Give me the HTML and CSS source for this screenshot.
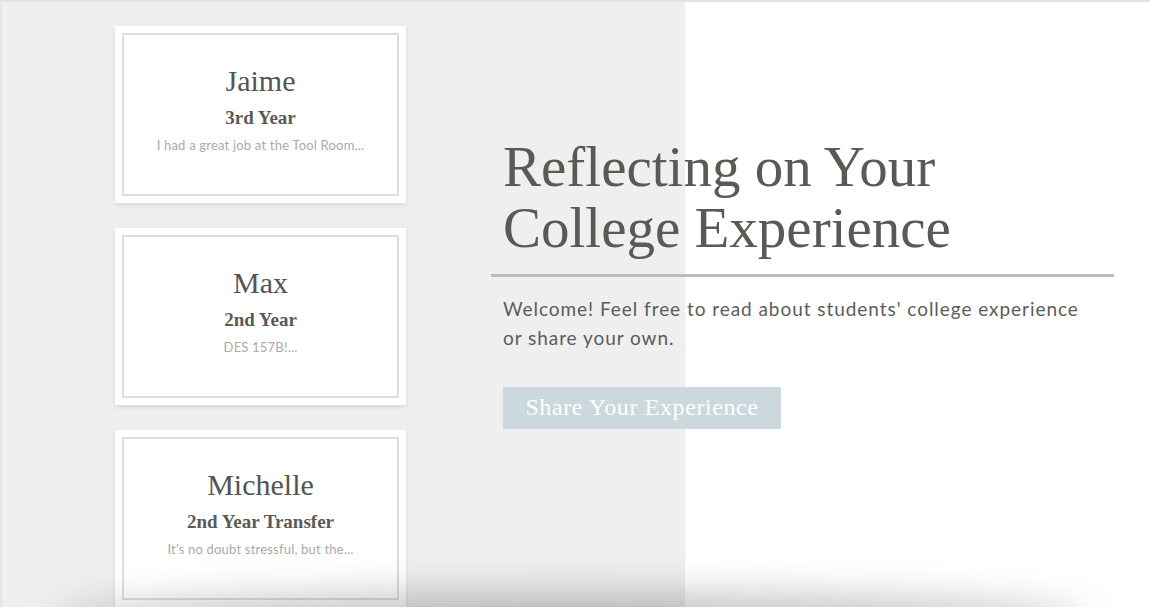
FILE: index.html
```html
<!DOCTYPE html>
<html>
<head>
<meta charset="utf-8">
<link rel="stylesheet" href="styles.css">
</head>
<body>
<div class="page">
  <div class="cards">
    <div class="card">
      <div class="card-inner">
        <div class="name">Jaime</div>
        <div class="year">3rd Year</div>
        <div class="excerpt">I had a great job at the Tool Room...</div>
      </div>
    </div>
    <div class="card">
      <div class="card-inner">
        <div class="name">Max</div>
        <div class="year">2nd Year</div>
        <div class="excerpt">DES 157B!...</div>
      </div>
    </div>
    <div class="card">
      <div class="card-inner">
        <div class="name">Michelle</div>
        <div class="year">2nd Year Transfer</div>
        <div class="excerpt">It's no doubt stressful, but the...</div>
      </div>
    </div>
  </div>
  <div class="hero">
    <h1 class="title">Reflecting on Your<br>College Experience</h1>
    <div class="divider"></div>
    <p class="intro">Welcome! Feel free to read about students' college experience or share your own.</p>
    <a class="btn">Share Your Experience</a>
  </div>
  <div class="shade"></div>
</div>
</body>
</html>
```
FILE: styles.css
```css
html, body {
  margin: 0;
  padding: 0;
  height: 607px;
  overflow: hidden;
}
body {
  background: #fff;
}
.page {
  position: relative;
  height: 607px;
  overflow: hidden;
  border-top: 2px solid #e3e3e3;
  border-left: 2px solid #e6e6e6;
  background: linear-gradient(to right, #efefef 683px, #ffffff 683px);
  display: flex;
  align-items: flex-start;
  padding-left: 113px;
  box-sizing: border-box;
}
.cards {
  width: 291px;
  padding-top: 24px;
  display: flex;
  flex-direction: column;
  gap: 25px;
  flex-shrink: 0;
}
.card {
  background: #fff;
  padding: 7px;
  height: 177px;
  box-sizing: border-box;
  box-shadow: 0 2px 4px rgba(0,0,0,0.10);
}
.card-inner {
  border: 2px solid #dcdfe0;
  height: 100%;
  box-sizing: border-box;
  display: flex;
  flex-direction: column;
  align-items: center;
  padding-top: 28px;
}
.name {
  font-family: "Liberation Serif", serif;
  font-size: 30px;
  color: #545452;
  line-height: 36px;
}
.year {
  font-family: "Liberation Serif", serif;
  font-size: 19px;
  font-weight: bold;
  color: #5a5a57;
  margin-top: 7px;
  line-height: 24px;
}
.excerpt {
  font-family: "Lato", sans-serif;
  font-size: 13px;
  letter-spacing: 0.2px;
  color: #aaaaaa;
  margin-top: 6px;
  line-height: 18px;
}
.hero {
  margin-left: 85px;
  width: 623px;
  padding-top: 134px;
}
.title {
  margin: 0;
  padding-left: 12px;
  font-family: "Liberation Serif", serif;
  font-weight: normal;
  font-size: 57px;
  line-height: 61px;
  color: #5a5a55;
}
.divider {
  height: 3px;
  background: #bcbcbc;
  margin-top: 16px;
}
.intro {
  margin: 17px 0 0 0;
  padding-left: 12px;
  font-family: "Lato", sans-serif;
  font-size: 19px;
  letter-spacing: 0.95px;
  line-height: 29px;
  color: #5c5c5c;
  width: 590px;
}
.btn {
  display: inline-block;
  margin: 35px 0 0 12px;
  width: 278px;
  height: 42px;
  line-height: 40px;
  background: #cbd8dd;
  color: #fff;
  font-family: "Liberation Serif", serif;
  font-size: 24px;
  letter-spacing: 0.6px;
  text-align: center;
}
.shade {
  position: absolute;
  left: 60px;
  right: 70px;
  top: 607px;
  height: 40px;
  box-shadow: 0 -6px 40px 8px rgba(0,0,0,0.25);
  border-radius: 50%;
}
```
